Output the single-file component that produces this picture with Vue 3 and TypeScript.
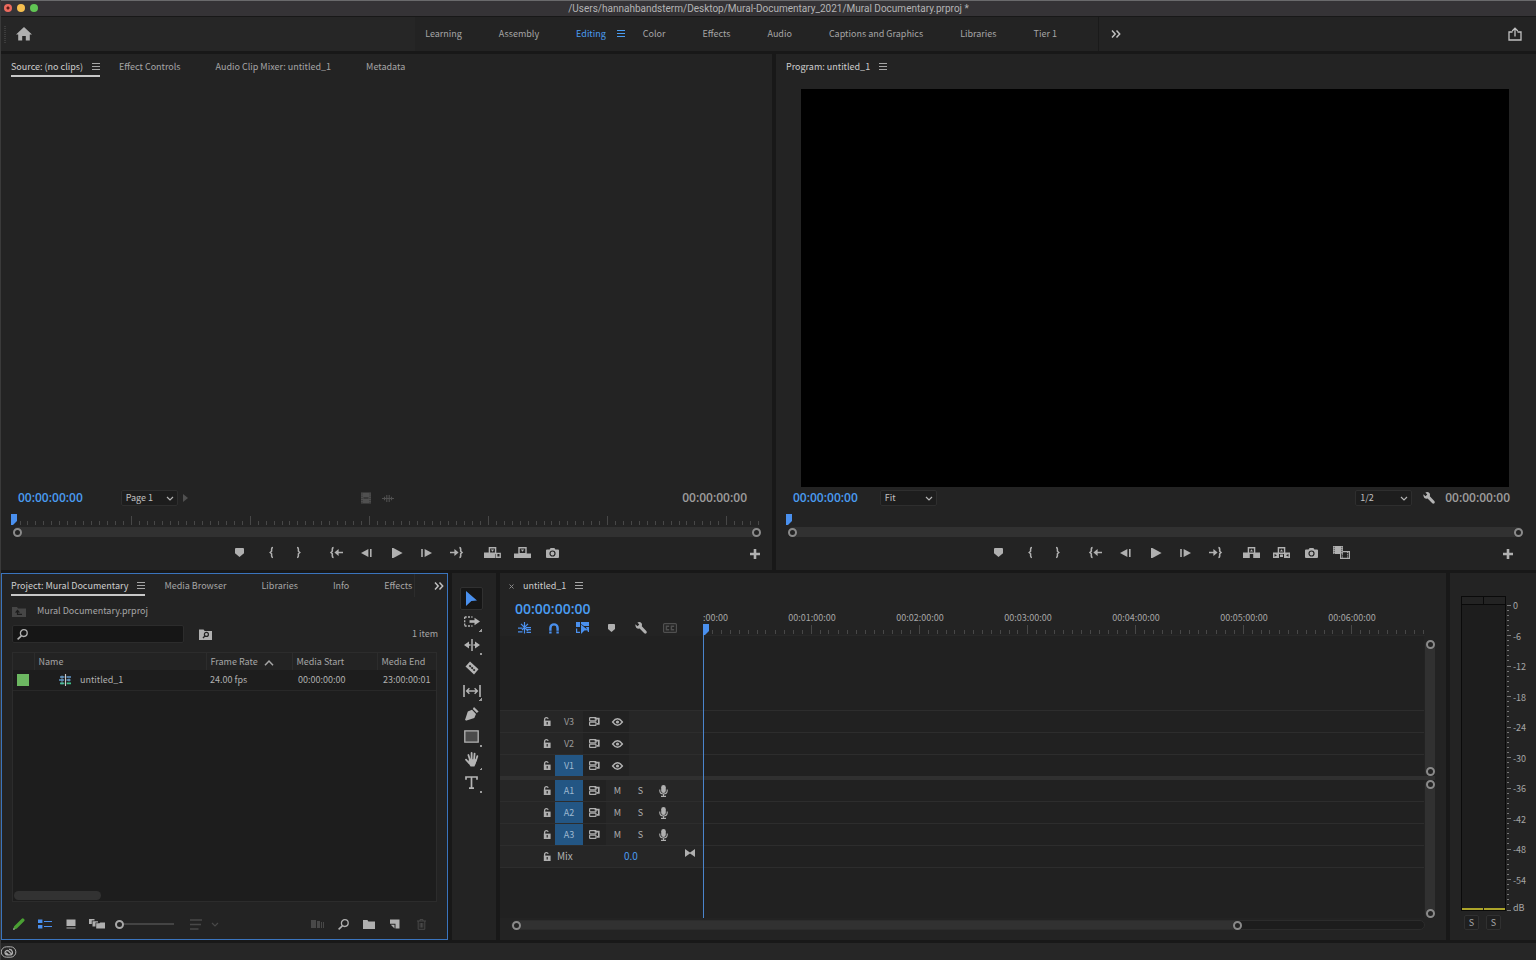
<script setup lang="ts">
import { h, ref } from 'vue'

type Glyph = { w: number; h: number; body: string }

const glyphs: Record<string, Glyph> = {
  home: { w: 16, h: 14, body: '<path d="M8 0 16 7.6H13.8V13.5H9.8V9H6.2V13.5H2.2V7.6H0Z" fill="currentColor"/>' },
  menu: { w: 8, h: 8, body: '<path d="M0 .5H8M0 3.5H8M0 6.5H8" stroke="currentColor"/>' },
  more: { w: 10, h: 8, body: '<path d="M1 .5 4.2 4 1 7.5M5.5 .5 8.7 4 5.5 7.5" fill="none" stroke="currentColor" stroke-width="1.5"/>' },
  share: { w: 14, h: 14, body: '<path d="M4.5 5H1V13H13V5H9.5M7 9.5V1.5M4.2 4 7 1.2 9.8 4" fill="none" stroke="currentColor" stroke-width="1.3"/>' },
  chevron: { w: 8, h: 5, body: '<path d="M1 1 4 4 7 1" fill="none" stroke="currentColor" stroke-width="1.2"/>' },
  caret: { w: 10, h: 6, body: '<path d="M1 5.2 5 1 9 5.2" fill="none" stroke="currentColor" stroke-width="1.5"/>' },
  tri: { w: 5, h: 8, body: '<path d="M0 0 5 4 0 8Z" fill="currentColor"/>' },
  film: { w: 10, h: 12, body: '<path d="M0 .5H10V11.5H0Z" fill="currentColor"/><path d="M2.5 6H7.5" stroke="#232323"/><path d="M1 1.5V11M9 1.5V11" stroke="#232323" stroke-width=".8" stroke-dasharray="1 1.2"/>' },
  wave: { w: 12, h: 9, body: '<path d="M0 4.5H12" stroke="currentColor"/><path d="M2.5 2.8V6.2M4.8 1V8M7.2 1V8M9.5 2.8V6.2" stroke="currentColor" stroke-width="1.1"/>' },
  marker: { w: 9, h: 9, body: '<path d="M1 0H8Q9 0 9 1V5.2L4.5 9 0 5.2V1Q0 0 1 0Z" fill="currentColor"/>' },
  braceL: { w: 5, h: 11, body: '<path d="M4 .6Q2.6 .6 2.6 2V4.2L1.2 5.5 2.6 6.8V9Q2.6 10.4 4 10.4" fill="none" stroke="currentColor" stroke-width="1.5"/>' },
  braceR: { w: 5, h: 11, body: '<path d="M1 .6Q2.4 .6 2.4 2V4.2L3.8 5.5 2.4 6.8V9Q2.4 10.4 1 10.4" fill="none" stroke="currentColor" stroke-width="1.5"/>' },
  gotoIn: { w: 13, h: 11, body: '<path d="M3.6 .6Q2.3 .6 2.3 2V4.2L1 5.5 2.3 6.8V9Q2.3 10.4 3.6 10.4M7 5.5H13" fill="none" stroke="currentColor" stroke-width="1.6"/><path d="M4.4 5.5 8.6 2V9Z" fill="currentColor"/>' },
  gotoOut: { w: 13, h: 11, body: '<path d="M9.4 .6Q10.7 .6 10.7 2V4.2L12 5.5 10.7 6.8V9Q10.7 10.4 9.4 10.4M0 5.5H6" fill="none" stroke="currentColor" stroke-width="1.6"/><path d="M8.6 5.5 4.4 2V9Z" fill="currentColor"/>' },
  stepBack: { w: 11, h: 8, body: '<path d="M0 4 7.4 0V8Z" fill="currentColor"/><path d="M9.8 0V8" stroke="currentColor" stroke-width="1.6"/>' },
  stepFwd: { w: 11, h: 8, body: '<path d="M11 4 3.6 0V8Z" fill="currentColor"/><path d="M1 0V8" stroke="currentColor" stroke-width="1.6"/>' },
  play: { w: 10, h: 10, body: '<path d="M0 0H1.4L10.6 5 1.4 10H0Z" fill="currentColor"/>' },
  insert: { w: 17, h: 11, body: '<path d="M0 5.5H7.5V11H0ZM7 7H11.5V11H7Z" fill="currentColor"/><path d="M12.7 6.4H16.2V10.3H12.7ZM5.4 .7H11.6V6.2H5.4Z" fill="#232323" stroke="currentColor" stroke-width="1.4"/><path d="M6.8 2.4H10.2L8.5 4.8Z" fill="currentColor"/>' },
  overwrite: { w: 17, h: 11, body: '<path d="M0 6.5H17V11H0Z" fill="currentColor"/><path d="M5 .7H12V6.8H5Z" fill="#232323" stroke="currentColor" stroke-width="1.4"/><path d="M6.8 2.4H10.2L8.5 4.8Z" fill="currentColor"/>' },
  lift: { w: 17, h: 11, body: '<path d="M0 5.5H6.8V11H0ZM10.2 5.5H17V11H10.2Z" fill="currentColor"/><path d="M5.4 .7H11.6V6.2H5.4Z" fill="#232323" stroke="currentColor" stroke-width="1.4"/><path d="M7 4.6H10L8.5 2.2Z" fill="currentColor"/>' },
  extract: { w: 17, h: 11, body: '<path d="M0 5.5H6V11H0ZM11 5.5H17V11H11ZM7 7.5H10V10H7Z" fill="currentColor"/><path d="M5.4 .7H11.6V6.2H5.4Z" fill="#232323" stroke="currentColor" stroke-width="1.4"/><path d="M7 4.6H10L8.5 2.2Z" fill="currentColor"/><path d="M1.5 7 4 8.3 1.5 9.8ZM15.5 7 13 8.3 15.5 9.8Z" fill="#232323"/>' },
  camera: { w: 13, h: 10, body: '<path d="M1 1.6H3.6L4.6 0H8.4L9.4 1.6H12Q13 1.6 13 2.6V9Q13 10 12 10H1Q0 10 0 9V2.6Q0 1.6 1 1.6Z" fill="currentColor"/><circle cx="6.5" cy="5.5" r="2.5" fill="none" stroke="#232323" stroke-width="1.2"/>' },
  compare: { w: 17, h: 13, body: '<path d="M7.6 5.6H16.4V12.4H7.6Z" fill="#232323" stroke="currentColor" stroke-width="1.2"/><path d="M9.4 6V12.5M14.6 6V12.5" stroke="currentColor" stroke-dasharray="1.2 1"/><path d="M0 0H10V8H0Z" fill="currentColor"/><path d="M1.2 .8V8M8.8 .8V8" stroke="#232323" stroke-width=".9" stroke-dasharray="1 1"/>' },
  plus: { w: 10, h: 10, body: '<path d="M5 0V10M0 5H10" stroke="currentColor" stroke-width="2.6"/>' },
  wrench: { w: 12, h: 12, body: '<path d="M.4 2.3 2.5 4.2 4.3 2.4 2.4 .4Q5-.6 6.6 1.3 7.4 2.6 6.8 4.3L11.5 9.2Q12.2 10.2 11.4 11.2 10.3 12.1 9.3 11.3L4.6 6.5Q2.8 7 1.4 5.9 0 4.2.4 2.3Z" fill="currentColor"/>' },
  folderUp: { w: 14, h: 11, body: '<path d="M0 1H5L6 2.4H14V11H0Z" fill="currentColor"/><path d="M10 8.4H5.5V5M3.6 6.6 5.5 4.5 7.4 6.6" fill="none" stroke="#1c1c1c" stroke-width="1.2"/>' },
  search: { w: 11, h: 11, body: '<circle cx="6.8" cy="4.1" r="3.4" fill="none" stroke="currentColor" stroke-width="1.3"/><path d="M4.4 6.8.6 10.4" stroke="currentColor" stroke-width="1.6"/>' },
  folderFind: { w: 13, h: 11, body: '<path d="M0 .6H4.6L5.6 2H13V11H0Z" fill="currentColor"/><circle cx="7.4" cy="5.4" r="2" fill="none" stroke="#232323" stroke-width="1.2"/><path d="M6 6.9 4 9" stroke="#232323" stroke-width="1.3"/>' },
  folder: { w: 12, h: 9, body: '<path d="M0 0H4.4L5.4 1.6H12V9H0Z" fill="currentColor"/>' },
  sequence: { w: 13, h: 12, body: '<path d="M1 3H5.5M0 6H5M7.5 3H12M7.5 6H11.5" stroke="#5f95c6" stroke-width="1.5"/><path d="M1 9.4H5.3M7.7 9.4H12" stroke="#3fbf8a" stroke-width="1.7"/><path d="M3 1.5V10.4M10 4.5V7.5" stroke="#7fa8c8" stroke-width=".8"/><path d="M6.5 0V12" stroke="#c9c9c9" stroke-width="1.1"/>' },
  pencil: { w: 12, h: 12, body: '<path d="M0 12 1.2 8.2 8.8.7Q9.8-.2 11 .9 12.2 2 11.3 3.1L3.8 10.6Z" fill="#4aa033"/><path d="M0 12 .7 9.8 2.2 11.2Z" fill="#9c9c9c"/>' },
  list: { w: 14, h: 10, body: '<path d="M0 .5H4.4V4H0ZM0 6H4.4V9.5H0Z" fill="currentColor"/><path d="M6 2.5H14M6 7.5H14" stroke="currentColor"/>' },
  iconView: { w: 10, h: 10, body: '<path d="M.5.5H9.5V7H.5Z" fill="currentColor"/><path d="M.5 9H9.5" stroke="currentColor"/>' },
  freeform: { w: 16, h: 10, body: '<path d="M0 0H5.5V1.6H2.8V5H0Z" fill="currentColor"/><path d="M3.5 2.2H9V3.6H6.5V7.5H3.5Z" fill="currentColor"/><path d="M7.2 4.2H10.5L11.3 3.4H16V9.6H7.2Z" fill="currentColor"/>' },
  sort: { w: 12, h: 11, body: '<path d="M0 1H12M0 5.5H11M0 10H8.5" stroke="currentColor" stroke-width="1.3"/>' },
  automate: { w: 13, h: 8, body: '<path d="M0 0H5V8H0ZM6 1H9V8H6ZM10 2H11V8H10ZM12 2H13V8H12Z" fill="currentColor"/>' },
  newItem: { w: 10, h: 10, body: '<path d="M0 .5H9.5V9.5H5.5V4.8H0Z" fill="currentColor"/><path d="M.8 5.8H4.5V9.5Z" fill="currentColor"/>' },
  trash: { w: 9, h: 11, body: '<path d="M0 2H9M3 2V.6H6V2M1.2 2V10.3H7.8V2M3.2 4V8.6M4.5 4V8.6M5.8 4V8.6" fill="none" stroke="currentColor"/>' },
  arrow: { w: 11, h: 15, body: '<path d="M0 0 11 9.6 5.4 10 0 15Z" fill="currentColor"/>' },
  trackSel: { w: 16, h: 11, body: '<path d="M.7 1H8.5M.7 10H8.5M.7 1V10" fill="none" stroke="currentColor" stroke-width="1.3" stroke-dasharray="2 1.3"/><path d="M5.5 5.5H11" stroke="currentColor" stroke-width="2.6"/><path d="M10.5 1.8 16 5.5 10.5 9.2Z" fill="currentColor"/>' },
  ripple: { w: 16, h: 12, body: '<path d="M8 0V12M3 6H6.6M9.4 6H13" stroke="currentColor" stroke-width="1.5"/><path d="M0 6 5 2.6V9.4ZM16 6 11 2.6V9.4Z" fill="currentColor"/>' },
  razor: { w: 14, h: 14, body: '<path d="M5 .5 13.5 8.2 9 13.5.5 5.5Z" fill="currentColor"/><path d="M4.4 4.4 9.8 9.6" stroke="#232323" stroke-width="1.8" stroke-dasharray="2 .8"/>' },
  slip: { w: 18, h: 12, body: '<path d="M1 0V12M17 0V12" stroke="currentColor" stroke-width="1.6"/><path d="M3.6 6H14.4M6.4 3.2 3.6 6 6.4 8.8M11.6 3.2 14.4 6 11.6 8.8" fill="none" stroke="currentColor" stroke-width="1.4"/>' },
  pen: { w: 14, h: 14, body: '<path d="M9 0 13.6 4.6 11.8 6 7.8 2Z" fill="currentColor"/><path d="M7 2.8 11 7 9.3 11 .8 13.8 5 9.4Q4.4 8.2 5.6 7.7 7 7.8 6.9 9.2 6.2 10 5.2 9.8L1.3 13.6 0 13 2.8 4.6Z" fill="currentColor"/>' },
  rect: { w: 15, h: 13, body: '<path d="M.8.8H14.2V12.2H.8Z" fill="#4b4b4b" stroke="currentColor" stroke-width="1.3"/>' },
  hand: { w: 14, h: 15, body: '<path d="M3.4 3 5 8M6.6 1V8M9.6 1.6 9 8M12.3 4.2 10.8 9M1 7.6 4 11" stroke="currentColor" stroke-width="1.8" stroke-linecap="round"/><path d="M4 7.3H11.4L11 11 9.4 14.5H5.6L3 10.5Z" fill="currentColor"/>' },
  type: { w: 13, h: 13, body: '<path d="M1 3.8V1H12V3.8M6.5 1V12M4 12.2H9" fill="none" stroke="currentColor" stroke-width="1.7"/>' },
  nest: { w: 13, h: 12, body: '<path d="M6.5 0V11.5M3 1.8 10 9M10 1.8 4 8" stroke="currentColor" stroke-width="1.2"/><path d="M0 6.2H4.5M8 5.6H13M8.5 7.6H13M0 9.8H4.5M8.5 10.4H13" stroke="currentColor" stroke-width="1.3"/>' },
  magnet: { w: 10, h: 11, body: '<path d="M1.4 10.5V5A3.6 3.6 0 0 1 8.6 5V10.5" fill="none" stroke="currentColor" stroke-width="2.4"/><path d="M0 8.2H10" stroke="#232323" stroke-width=".7"/>' },
  linked: { w: 13, h: 12, body: '<path d="M0 0H4V5H0ZM5 0H13V4H8L5 2ZM10 5H13V10H12Z" fill="currentColor"/><path d="M.6 6.5V10.4H4" fill="none" stroke="currentColor" stroke-width="1.2"/><path d="M5 2.5 12 8.2 8.4 8.6 5 12Z" fill="currentColor"/>' },
  smallMarker: { w: 7, h: 8, body: '<path d="M.8 0H6.2Q7 0 7 .8V5L3.5 8 0 5V.8Q0 0 .8 0Z" fill="currentColor"/>' },
  cc: { w: 14, h: 10, body: '<rect x=".6" y=".6" width="12.8" height="8.8" rx="1" fill="none" stroke="currentColor" stroke-width="1.2"/><path d="M6.2 3.2H3.4V6.8H6.2M11.2 3.2H8.4V6.8H11.2" fill="none" stroke="currentColor" stroke-width="1.5"/>' },
  lock: { w: 8, h: 10, body: '<path d="M1.6 4.5V2.4Q1.6.7 3.4.7 4.8.7 5.2 1.8" fill="none" stroke="currentColor" stroke-width="1.3"/><path d="M.8 3.6H7.6V9H.8Z" fill="currentColor"/><path d="M4.2 5V7.6" stroke="#262626" stroke-width="1.2"/>' },
  sync: { w: 11, h: 10, body: '<rect x=".6" y=".6" width="6.4" height="3.2" rx=".6" fill="none" stroke="currentColor" stroke-width="1.2"/><rect x=".6" y="5.2" width="6.4" height="3.2" rx=".6" fill="none" stroke="currentColor" stroke-width="1.2"/><path d="M5.6 1.6H9.8V6.8H7.6" fill="none" stroke="currentColor" stroke-width="1.7"/>' },
  eye: { w: 11, h: 8, body: '<path d="M.6 4Q5.5-2.4 10.4 4 5.5 10.4 .6 4Z" fill="none" stroke="currentColor" stroke-width="1.4"/><circle cx="5.5" cy="4" r="1.6" fill="currentColor"/>' },
  mic: { w: 9, h: 12, body: '<rect x="2.2" y="0" width="4.6" height="8" rx="2.3" fill="currentColor"/><path d="M.8 4.5V6Q1 9 4.5 9 8 9 8.2 6V4.5M4.5 9V11.4M2 11.4H7" fill="none" stroke="currentColor" stroke-width="1.1"/>' },
  bowtie: { w: 10, h: 8, body: '<path d="M0 0 4.2 3V5L0 8ZM10 0 5.8 3V5L10 8Z" fill="currentColor"/><path d="M4 4H6" stroke="currentColor" stroke-width="1.6"/>' },
  playhead: { w: 6, h: 11, body: '<path d="M0 0H6V7L2 11H0Z" fill="currentColor"/>' },
  cloud: { w: 14, h: 12, body: '<path d="M4.5.8H8.5A5 5 0 0 1 8.8 11.2H4.4A4.8 4.8 0 0 1 4.5.8Z" fill="none" stroke="currentColor"/><path d="M7 3.4A3 3 0 0 1 9 8.9H5.2A2.2 2.2 0 1 1 6.6 5L9 7.6M4 6.7 6 8.5" fill="none" stroke="currentColor" stroke-width="1.3"/>' },
  close: { w: 5, h: 5, body: '<path d="M.5.5 4.5 4.5M4.5.5.5 4.5" stroke="currentColor"/>' },
}

const Icon = (props: { name: string }) => {
  const g = glyphs[props.name]
  return h('svg', { class: 'icon', width: g.w, height: g.h, viewBox: `0 0 ${g.w} ${g.h}`, 'aria-hidden': 'true', innerHTML: g.body })
}
Icon.props = ['name']

const workspaces = ['Learning', 'Assembly', 'Editing', 'Color', 'Effects', 'Audio', 'Captions and Graphics', 'Libraries', 'Tier 1']
const sourceTabs = ['Source: (no clips)', 'Effect Controls', 'Audio Clip Mixer: untitled_1', 'Metadata']
const projectTabs = ['Project: Mural Documentary', 'Media Browser', 'Libraries', 'Info', 'Effects']

const transport = (last: string[][]) => [
  [['marker', 'Add Marker']],
  [['braceL', 'Mark In'], ['braceR', 'Mark Out']],
  [['gotoIn', 'Go to In'], ['stepBack', 'Step Back'], ['play', 'Play'], ['stepFwd', 'Step Forward'], ['gotoOut', 'Go to Out']],
  last,
]
const sourceTransport = transport([['insert', 'Insert'], ['overwrite', 'Overwrite'], ['camera', 'Export Frame']])
const programTransport = transport([['lift', 'Lift'], ['extract', 'Extract'], ['camera', 'Export Frame'], ['compare', 'Comparison View']])

const tools = [
  ['arrow', 'Selection', false], ['trackSel', 'Track Select', true], ['ripple', 'Ripple Edit', true],
  ['razor', 'Razor', false], ['slip', 'Slip', true], ['pen', 'Pen', false],
  ['rect', 'Rectangle', true], ['hand', 'Hand', true], ['type', 'Type', true],
] as [string, string, boolean][]
const activeTool = ref('arrow')

const videoTracks = [{ id: 'V3', on: false }, { id: 'V2', on: false }, { id: 'V1', on: true }]
const audioTracks = ['A1', 'A2', 'A3']

const sourceTicks = Array.from({ length: 94 }, (_, i) => ({ x: ((3 + i * 7.94) / 746) * 100, major: i % 15 === 14 }))
const rulerTicks = Array.from({ length: 80 }, (_, i) => ({ x: (((i + 1) * 9) / 722) * 100, major: (i + 1) % 12 === 0 }))
const rulerLabels = [1, 2, 3, 4, 5, 6].map((m) => ({ text: `00:0${m}:00:00`, left: `${((m * 108 + 1) / 722) * 100}%` }))
const meterTicks = Array.from({ length: 61 }, (_, i) => ({ y: (i / 60) * 100, major: i % 6 === 0 }))
const meterLabels = ['0', '-6', '-12', '-18', '-24', '-30', '-36', '-42', '-48', '-54', 'dB'].map((text, i) => ({
  text,
  top: `${i === 10 ? 99 : i * 10}%`,
}))

const search = ref('')
const page = ref('Page 1')
const fit = ref('Fit')
const quality = ref('1/2')
const thumbSize = ref(0)
</script>

<template>
  <div class="app">
    <div class="top">
      <header class="titlebar">
        <div class="lights">
          <button class="light red" aria-label="Close"></button>
          <button class="light yellow" aria-label="Minimize"></button>
          <button class="light green" aria-label="Zoom"></button>
        </div>
        <span>/Users/hannahbandsterm/Desktop/Mural-Documentary_2021/Mural Documentary.prproj *</span>
      </header>
      <div class="workbar">
        <div class="work-left">
          <span class="grip"></span>
          <button aria-label="Home"><Icon name="home" /></button>
        </div>
        <nav class="workspaces">
          <button v-for="w in workspaces" :key="w" class="workspace" :class="{ active: w === 'Editing' }">
            {{ w }}<Icon v-if="w === 'Editing'" name="menu" />
          </button>
        </nav>
        <div class="work-right">
          <button aria-label="More workspaces"><Icon name="more" /></button>
          <button aria-label="Quick export"><Icon name="share" /></button>
        </div>
      </div>
    </div>

    <main class="upper">
      <section class="panel">
        <div class="tabs">
          <button v-for="(t, i) in sourceTabs" :key="t" class="tab" :class="{ active: i === 0, under: i === 0 }">
            {{ t }}<Icon v-if="i === 0" name="menu" />
          </button>
        </div>
        <div class="viewer"></div>
        <div class="info source-info">
          <span class="time blue">00:00:00:00</span>
          <label class="drop">
            <select v-model="page" aria-label="Page"><option>Page 1</option></select>
            <Icon name="chevron" />
          </label>
          <button class="faint" aria-label="Next page"><Icon name="tri" /></button>
          <div class="drag">
            <button class="faint" aria-label="Drag video only"><Icon name="film" /></button>
            <button class="faint" aria-label="Drag audio only"><Icon name="wave" /></button>
          </div>
          <span class="time end">00:00:00:00</span>
        </div>
        <div class="scrub">
          <Icon name="playhead" class="head" />
          <svg class="ticks" height="12" aria-hidden="true">
            <line v-for="(t, i) in sourceTicks" :key="i" :x1="t.x + '%'" :x2="t.x + '%'" :y1="t.major ? 3 : 8" y2="12" />
          </svg>
        </div>
        <div class="zoombar"><i></i><i></i></div>
        <div class="transport">
          <span class="lead-source"></span>
          <div v-for="(g, gi) in sourceTransport" :key="gi" class="group" :class="'g' + gi">
            <button v-for="b in g" :key="b[0]" :aria-label="b[1]"><Icon :name="b[0]" /></button>
          </div>
          <span class="tail-source"></span>
          <button class="add" aria-label="Button editor"><Icon name="plus" /></button>
        </div>
      </section>

      <section class="panel program">
        <div class="tabs">
          <button class="tab active">Program: untitled_1<Icon name="menu" /></button>
        </div>
        <div class="viewer"><div class="screen"></div></div>
        <div class="info program-info">
          <span class="time blue">00:00:00:00</span>
          <label class="drop">
            <select v-model="fit" aria-label="Zoom level"><option>Fit</option></select>
            <Icon name="chevron" />
          </label>
          <label class="drop right">
            <select v-model="quality" aria-label="Playback resolution"><option>1/2</option></select>
            <Icon name="chevron" />
          </label>
          <button aria-label="Settings"><Icon name="wrench" /></button>
          <span class="time">00:00:00:00</span>
        </div>
        <div class="scrub"><Icon name="playhead" class="head" /></div>
        <div class="zoombar"><i></i><i></i></div>
        <div class="transport">
          <span class="lead-program"></span>
          <div v-for="(g, gi) in programTransport" :key="gi" class="group" :class="'g' + gi">
            <button v-for="b in g" :key="b[0]" :aria-label="b[1]"><Icon :name="b[0]" /></button>
          </div>
          <span class="tail-program"></span>
          <button class="add" aria-label="Button editor"><Icon name="plus" /></button>
        </div>
      </section>
    </main>

    <div class="lower">
      <section class="panel project">
        <div class="tabs">
          <button v-for="(t, i) in projectTabs" :key="t" class="tab" :class="{ active: i === 0, under: i === 0 }">
            {{ t }}<Icon v-if="i === 0" name="menu" />
          </button>
          <button class="tab-more" aria-label="More panels"><Icon name="more" /></button>
        </div>
        <div class="crumb"><Icon name="folderUp" /><span>Mural Documentary.prproj</span></div>
        <div class="find">
          <label class="searchbox">
            <Icon name="search" />
            <input v-model="search" type="text" aria-label="Search project" />
          </label>
          <button aria-label="Create search bin"><Icon name="folderFind" /></button>
          <span class="count">1 item</span>
        </div>
        <div class="listing">
          <table>
            <colgroup><col class="c-label" /><col /><col class="c-rate" /><col class="c-start" /><col class="c-end" /></colgroup>
            <thead>
              <tr>
                <th aria-label="Label"></th><th>Name</th><th>Frame Rate<Icon name="caret" /></th><th>Media Start</th><th>Media End</th>
              </tr>
            </thead>
            <tbody>
              <tr>
                <td><span class="swatch"></span></td>
                <td><span class="clip"><Icon name="sequence" />untitled_1</span></td>
                <td>24.00 fps</td><td class="inset">00:00:00:00</td><td class="inset">23:00:00:01</td>
              </tr>
            </tbody>
          </table>
          <span class="hthumb"></span>
        </div>
        <div class="project-bar">
          <button aria-label="Toggle write access"><Icon name="pencil" /></button>
          <button class="on" aria-label="List view"><Icon name="list" /></button>
          <button aria-label="Icon view"><Icon name="iconView" /></button>
          <button aria-label="Freeform view"><Icon name="freeform" /></button>
          <input v-model="thumbSize" type="range" min="0" max="100" aria-label="Thumbnail size" />
          <button class="faint sorter" aria-label="Sort icons"><Icon name="sort" /><Icon name="chevron" /></button>
          <div class="bar-right">
            <button class="faint" aria-label="Automate to sequence"><Icon name="automate" /></button>
            <button aria-label="Find"><Icon name="search" /></button>
            <button aria-label="New bin"><Icon name="folder" /></button>
            <button aria-label="New item"><Icon name="newItem" /></button>
            <button class="faint" aria-label="Delete"><Icon name="trash" /></button>
          </div>
        </div>
      </section>

      <aside class="panel tools">
        <button
          v-for="t in tools"
          :key="t[0]"
          class="tool"
          :class="{ active: activeTool === t[0] }"
          :aria-label="t[1]"
          @click="activeTool = t[0]"
        >
          <Icon :name="t[0]" />
          <span v-if="t[2]" class="corner"></span>
        </button>
      </aside>

      <section class="panel timeline">
        <div class="tabs">
          <button class="closer" aria-label="Close sequence"><Icon name="close" /></button>
          <button class="tab active">untitled_1<Icon name="menu" /></button>
        </div>
        <div class="tl-grid">
          <div class="tl-head">
            <span class="time blue big">00:00:00:00</span>
            <div class="tl-icons">
              <button class="on" aria-label="Insert as nest"><Icon name="nest" /></button>
              <button class="on" aria-label="Snap"><Icon name="magnet" /></button>
              <button class="on" aria-label="Linked selection"><Icon name="linked" /></button>
              <button aria-label="Add marker"><Icon name="smallMarker" /></button>
              <button aria-label="Timeline settings"><Icon name="wrench" /></button>
              <button class="faint" aria-label="Captions"><Icon name="cc" /></button>
            </div>
          </div>
          <div class="ruler">
            <span class="first">:00:00</span>
            <span v-for="l in rulerLabels" :key="l.text" class="mark" :style="{ left: l.left }">{{ l.text }}</span>
            <svg class="ticks" height="12" aria-hidden="true">
              <line v-for="(t, i) in rulerTicks" :key="i" :x1="t.x + '%'" :x2="t.x + '%'" :y1="t.major ? 3 : 8" y2="12" />
            </svg>
          </div>
          <span></span>

          <div class="tracks video">
            <div v-for="t in videoTracks" :key="t.id" class="track">
              <div class="track-head">
                <button class="lock" :aria-label="'Lock ' + t.id"><Icon name="lock" /></button>
                <button class="target" :class="{ active: t.on }">{{ t.id }}</button>
                <button class="cell dark" :aria-label="'Sync lock ' + t.id"><Icon name="sync" /></button>
                <button class="cell dark" :aria-label="'Show ' + t.id"><Icon name="eye" /></button>
              </div>
            </div>
          </div>
          <div class="vbar"><i></i><i></i></div>

          <div class="divider"></div>

          <div class="tracks audio">
            <div v-for="t in audioTracks" :key="t" class="track">
              <div class="track-head">
                <button class="lock" :aria-label="'Lock ' + t"><Icon name="lock" /></button>
                <button class="target active">{{ t }}</button>
                <button class="cell dark" :aria-label="'Sync lock ' + t"><Icon name="sync" /></button>
                <button class="cell">M</button>
                <button class="cell">S</button>
                <button class="cell" :aria-label="'Record ' + t"><Icon name="mic" /></button>
              </div>
            </div>
            <div class="track">
              <div class="track-head">
                <button class="lock" aria-label="Lock Mix"><Icon name="lock" /></button>
                <span class="mix">Mix</span>
                <span class="level">0.0</span>
                <button class="keys" aria-label="Keyframes"><Icon name="bowtie" /></button>
              </div>
            </div>
          </div>
          <div class="vbar"><i></i><i></i></div>

          <div class="playline"><Icon name="playhead" class="flag" /></div>
        </div>
        <div class="tl-scroll"><div class="tl-thumb"><i></i><i></i></div></div>
      </section>

      <aside class="panel meters">
        <div class="meter-row">
          <div class="meter">
            <div class="peaks"><span></span><span></span></div>
            <div class="floor"><span></span><span></span></div>
          </div>
          <div class="scale">
            <svg width="6" height="100%" aria-hidden="true">
              <line v-for="(t, i) in meterTicks" :key="i" x1="0" :x2="t.major ? 4 : 2" :y1="t.y + '%'" :y2="t.y + '%'" />
            </svg>
            <span v-for="l in meterLabels" :key="l.text" :style="{ top: l.top }">{{ l.text }}</span>
          </div>
        </div>
        <div class="solos">
          <button aria-label="Solo left">S</button>
          <button aria-label="Solo right">S</button>
        </div>
      </aside>
    </div>

    <footer class="status"><Icon name="cloud" /></footer>
  </div>
</template>

<style>
html,
body {
  margin: 0;
  background: #181818;
}
</style>

<style scoped>
.app {
  display: grid;
  grid-template-rows: 51px minmax(0, 516fr) minmax(0, 367fr) 17px;
  row-gap: 3px;
  height: 100vh;
  min-height: 640px;
  box-sizing: border-box;
  border-left: 1px solid #3a3a3a;
  background: #181818;
  color: #a6a6a6;
  font: 9px/14px 'Noto Sans CJK SC', 'Open Sans', sans-serif;
  overflow: hidden;
}
button {
  display: flex;
  align-items: center;
  justify-content: center;
  margin: 0;
  padding: 0;
  border: 0;
  background: none;
  color: inherit;
  font: inherit;
  white-space: nowrap;
}
.icon {
  display: block;
  flex: none;
  overflow: visible;
}
.on { color: #4a90ee; }
.faint { color: #505050; }
.top {
  display: grid;
  grid-template-rows: 17px 34px;
}
.titlebar {
  position: relative;
  display: flex;
  align-items: center;
  justify-content: center;
  border-top: 1px solid #6a6a6c;
  border-bottom: 1px solid #181818;
  background: #353336;
  color: #b4b3b5;
  font: 10px/14px Roboto, sans-serif;
}
.lights {
  position: absolute;
  left: 3px;
  top: 3px;
  display: flex;
  gap: 5px;
}
.light {
  width: 8px;
  height: 8px;
  border-radius: 50%;
}
.red { background: radial-gradient(circle, #5d1b16 0 1px, #ec6a5e 2px); }
.yellow { background: #f5bf4f; }
.green { background: #61c554; }

.workbar {
  display: flex;
  align-items: stretch;
  background: #232323;
}
.work-left {
  display: flex;
  align-items: center;
  gap: 10px;
  flex: 1 1 0;
  min-width: 0;
  padding-left: 3px;
  box-sizing: border-box;
  background: #262626;
}
.work-left button { color: #b0b0b0; }
.grip {
  width: 2px;
  height: 17px;
  background: repeating-linear-gradient(#3c3c3c 0 1px, #262626 1px 2px);
}
.workspaces {
  display: flex;
  align-items: center;
  gap: 18px;
  padding: 0 22px 0 10px;
}
.workspace { padding-right: 19px; }
.workspace.active { gap: 11px; padding-right: 0; color: #4a9cf0; }
.work-right {
  display: flex;
  justify-content: space-between;
  flex: 1 1 0;
  box-sizing: border-box;
  border-left: 1px solid #1a1a1a;
  padding: 0 14px 0 12px;
  color: #c0c0c0;
}

.upper {
  display: grid;
  grid-template-columns: minmax(0, 771fr) minmax(0, 760fr);
  gap: 4px;
  min-height: 0;
}
.panel {
  display: flex;
  flex-direction: column;
  min-width: 0;
  min-height: 0;
  background: #232323;
}
.tabs {
  display: flex;
  flex: none;
  gap: 19px;
  height: 24px;
  box-sizing: border-box;
  padding: 1px 0 0 10px;
}
.tab {
  padding-right: 16px;
}
.tab.active {
  gap: 9px;
  padding-right: 0;
  color: #cecece;
}
.tab .icon { color: #a6a6a6; }
.tab.under {
  position: relative;
}
.tab.under::after {
  content: '';
  position: absolute;
  inset: auto 0 1px 0;
  height: 2px;
  background: #c8c8c8;
}
.viewer {
  flex: 1;
  min-height: 0;
  padding: 11px 27px 0 25px;
}
.screen {
  height: 100%;
  background: #000;
}
.info {
  display: flex;
  flex: none;
  align-items: center;
  height: 21px;
  box-sizing: border-box;
  padding: 1px 26px 0 17px;
}
.time {
  font-family: 'Open Sans', sans-serif;
  font-size: 12px;
  font-weight: 600;
  line-height: 16px;
  color: #9d9d9d;
}
.time.blue { color: #4a9cf0; }
.end { margin-left: auto; }
.drop {
  position: relative;
  display: flex;
  align-items: center;
  width: 57px;
  margin-left: 38px;
  color: #b4b4b4;
}
.program-info .drop { margin-left: 22px; }
.program-info .drop.right { margin-left: auto; }
.program-info button { margin: 0 10px 0 11px; color: #b4b4b4; }
.drop select {
  width: 100%;
  height: 16px;
  padding: 0 0 0 4px;
  border: 1px solid #2e2e2e;
  border-radius: 2px;
  background: #1d1d1d;
  color: #c0c0c0;
  font: inherit;
  appearance: none;
}
.drop .icon {
  position: absolute;
  right: 4px;
}
.source-info .drop + button { margin-left: 5px; }
.source-info { padding-right: 25px; }
.drag {
  display: flex;
  gap: 11px;
  margin-left: 173px;
}
.scrub {
  display: flex;
  align-items: flex-end;
  height: 17px;
  padding: 0 9px 2px 10px;
  flex: none;
}
.head { color: #4a90ee; }
.ticks {
  display: block;
  flex: 1;
  width: 100%;
}
.ticks line {
  stroke: #474747;
  stroke-width: 1;
  shape-rendering: crispEdges;
}
.zoombar {
  display: flex;
  justify-content: space-between;
  align-items: center;
  flex: none;
  height: 10px;
  margin: 0 11px 0 12px;
  border-radius: 5px;
  background: #313131;
}
.program .zoombar { margin-right: 13px; }
i {
  display: block;
  width: 9px;
  height: 9px;
  box-sizing: border-box;
  border: 2px solid #8a8a8a;
  border-radius: 50%;
  background: #232323;
}
.transport {
  display: flex;
  flex: none;
  align-items: center;
  height: 33px;
  padding-bottom: 2px;
  box-sizing: border-box;
  color: #b0b0b0;
}
.lead-source { flex: 223; }
.tail-source { flex: 172; }
.lead-program { flex: 207; }
.tail-program { flex: 136; }
.group { display: flex; }
.group button { width: 30px; height: 20px; }
.g1 { margin: 0 10px 0 3px; }
.g1 button { width: 27px; }
.g3 { margin-left: 6px; }
.add { width: 30px; height: 20px; margin: 2px 2px 0 0; }
.program .add { margin-right: 13px; }

.lower {
  display: grid;
  grid-template-columns: minmax(0, 447fr) 44px minmax(0, 946fr) 86px;
  column-gap: 4px;
  min-height: 0;
}
.project {
  border: 1px solid #3a74bd;
}
.project .tabs {
  padding: 0 3px 0 9px;
  height: 23px;
}
.project .tab:nth-last-child(2) {
  padding-right: 2px;
  border-right: 1px solid #2c2c2c;
}
.tab-more {
  margin-left: auto;
  color: #c0c0c0;
}
.crumb {
  display: flex;
  align-items: center;
  gap: 11px;
  height: 28px;
  padding-left: 10px;
}
.crumb .icon { color: #464646; }
.find {
  display: flex;
  align-items: center;
  height: 18px;
  padding: 0 9px 0 10px;
}
.find button { margin-left: 15px; color: #b0b0b0; }
.searchbox {
  display: flex;
  align-items: center;
  width: 172px;
  height: 18px;
  padding-left: 4px;
  box-sizing: border-box;
  border: 1px solid #2c2c2c;
  border-radius: 2px;
  background: #161616;
  color: #b0b0b0;
}
.searchbox input {
  flex: 1;
  min-width: 0;
  border: 0;
  outline: 0;
  background: none;
  color: inherit;
  font: inherit;
}
.count { margin-left: auto; }
.listing {
  position: relative;
  flex: 1;
  min-height: 0;
  margin: 9px 10px 0;
  border: 1px solid #2c2c2c;
  background: #1d1d1d;
}
table {
  width: 100%;
  border-collapse: collapse;
  table-layout: fixed;
}
.c-label { width: 21px; }
.c-rate { width: 86px; }
.c-start { width: 85px; }
.c-end { width: 59px; }
th,
td {
  padding: 0 0 0 4px;
  text-align: left;
  font-weight: 400;
  white-space: nowrap;
}
th {
  height: 17px;
  background: #232323;
  border-right: 1px solid #2c2c2c;
}
th:last-child { border-right: 0; }
th .icon {
  display: inline-block;
  margin-left: 6px;
  vertical-align: -1px;
}
td {
  height: 20px;
  border-bottom: 1px solid #282828;
  color: #b0b0b0;
}
td.inset { padding-left: 6px; }
.swatch {
  display: block;
  width: 12px;
  height: 12px;
  background: #6cb761;
}
.clip {
  display: flex;
  align-items: center;
  gap: 8px;
  padding-left: 21px;
}
.hthumb {
  position: absolute;
  left: 1px;
  bottom: 1px;
  width: 87px;
  height: 9px;
  border-radius: 5px;
  background: #323232;
}
.project-bar {
  display: flex;
  flex: none;
  align-items: center;
  height: 37px;
  padding: 7px 13px 0 10px;
  box-sizing: border-box;
  color: #b0b0b0;
}
.project-bar > button { width: 26px; }
.project-bar > button:first-child { margin-left: -6px; }
.project-bar .on { color: #4a90ee; }
.project-bar .faint { color: #484848; }
.project-bar input {
  appearance: none;
  width: 59px;
  height: 9px;
  margin: 0 16px 0 5px;
  background: linear-gradient(#444, #444) center / 100% 2px no-repeat;
}
.project-bar input::-webkit-slider-thumb {
  appearance: none;
  box-sizing: border-box;
  width: 9px;
  height: 9px;
  border: 2px solid #a8a8a8;
  border-radius: 50%;
  background: #232323;
}
.project-bar .sorter {
  gap: 9px;
  width: auto;
}
.bar-right {
  display: flex;
  margin-left: auto;
}
.bar-right button { width: 26px; height: 14px; }

.tools {
  align-items: flex-start;
  padding: 14px 0 0 8px;
}
.tool {
  position: relative;
  width: 23px;
  height: 23px;
  box-sizing: border-box;
  color: #b4b4b4;
}
.tool.active {
  border: 1px solid #303030;
  border-radius: 2px;
  background: #161616;
  color: #4a90ee;
}
.corner {
  position: absolute;
  right: 1px;
  bottom: 1px;
  width: 3px;
  height: 3px;
  background: linear-gradient(135deg, transparent 50%, #9a9a9a 50%);
}

.timeline .tabs {
  gap: 9px;
  padding: 2px 0 0 9px;
}
.closer { width: 5px; color: #8a8a8a; }
.timeline {
  --head: 203px;
}
.tl-grid {
  position: relative;
  display: grid;
  flex: 1;
  min-height: 0;
  grid-template-columns: var(--head) minmax(0, 1fr) 10px;
  grid-template-rows: 39px minmax(0, 140fr) 4px minmax(0, 138fr);
  padding-right: 11px;
}
.tl-head {
  padding-left: 15px;
}
.tl-head .time {
  display: block;
  height: 24px;
  line-height: 24px;
}
.time.big { font-size: 14px; }
.tl-icons {
  display: flex;
  margin-left: -5px;
  height: 14px;
  color: #b0b0b0;
}
.tl-icons button { width: 29px; }
.ruler {
  position: relative;
  display: flex;
  align-items: flex-end;
  overflow: hidden;
  border-bottom: 1px solid #272727;
  box-sizing: border-box;
}
.ruler span {
  position: absolute;
  top: 14px;
}
.first { left: 0; }
.mark { transform: translateX(-50%); }
.ruler .ticks { margin-bottom: 1px; }
.tracks {
  grid-column: 1 / 3;
  display: flex;
  flex-direction: column;
  min-height: 0;
  margin-right: 1px;
  background: #212121;
  overflow: hidden;
}
.video { justify-content: flex-end; }
.track {
  display: flex;
  flex: none;
  height: 22px;
  box-sizing: border-box;
  border-top: 1px solid #2d2d2d;
}
.audio .track {
  border-top: 0;
  border-bottom: 1px solid #2d2d2d;
}
.track-head {
  display: flex;
  width: var(--head);
  padding-left: 38px;
  box-sizing: border-box;
  background: #262626;
  color: #b0b0b0;
}
.lock { width: 17px; }
.target { width: 28px; color: #9a9a9a; }
.target.active {
  background: #235684;
  color: #9fb9d0;
}
.cell { width: 23px; }
.dark { background: #222; }
.mix,
.level {
  font-size: 10px;
  line-height: 20px;
}
.mix {
  width: 67px;
  padding-left: 2px;
}
.level { color: #4a9cf0; }
.keys { margin: 0 8px 8px auto; }
.divider {
  grid-column: 1 / 4;
  background: #303030;
}
.vbar {
  display: flex;
  flex-direction: column;
  align-items: center;
  justify-content: space-between;
  margin: 4px 0 0;
  border-radius: 5px;
  background: #313131;
}
.audio + .vbar { margin: 0; }
.playline {
  position: absolute;
  left: var(--head);
  top: 27px;
  bottom: 0;
  border-left: 1px solid #4a84cc;
  color: #4a90ee;
}
.flag { margin-left: -1px; }
.tl-scroll {
  flex: none;
  height: 10px;
  margin: 2px 21px 10px 11px;
  border: 1px solid #2c2c2c;
  border-radius: 5px;
  box-sizing: border-box;
  background: #1d1d1d;
}
.tl-thumb {
  display: flex;
  align-items: center;
  justify-content: space-between;
  width: 80%;
  height: 100%;
  border-radius: 5px;
  background: #313131;
}

.meters { padding: 23px 0 0 11px; }
.meter-row {
  display: flex;
  flex: 1;
  min-height: 0;
}
.meter {
  display: flex;
  flex-direction: column;
  justify-content: space-between;
  width: 45px;
  box-sizing: border-box;
  border: 1px solid #0a0a0a;
  background: #1d1d1d;
}
.peaks,
.floor {
  display: grid;
  grid-template-columns: 1fr 1fr;
  gap: 1px;
}
.peaks {
  height: 7px;
  border-bottom: 1px solid #0a0a0a;
  background: #0a0a0a;
}
.peaks span { background: #232323; }
.floor span {
  height: 2px;
  background: #aca42a;
}
.scale {
  position: relative;
  flex: 1;
  margin: 9px 0 1px 1px;
}
.scale svg {
  display: block;
  overflow: visible;
}
.scale line {
  stroke: #777;
  shape-rendering: crispEdges;
}
.scale span {
  position: absolute;
  left: 6px;
  margin-top: -6px;
  line-height: 14px;
}
.solos {
  display: flex;
  gap: 7px;
  padding: 4px 0 10px 3px;
}
.solos button {
  width: 15px;
  height: 15px;
  border: 1px solid #303030;
  border-radius: 2px;
  box-sizing: border-box;
  background: #1f1f1f;
}
.status {
  display: flex;
  align-items: center;
  padding-left: 1px;
  background: #262626;
  color: #b0b0b0;
}
</style>
